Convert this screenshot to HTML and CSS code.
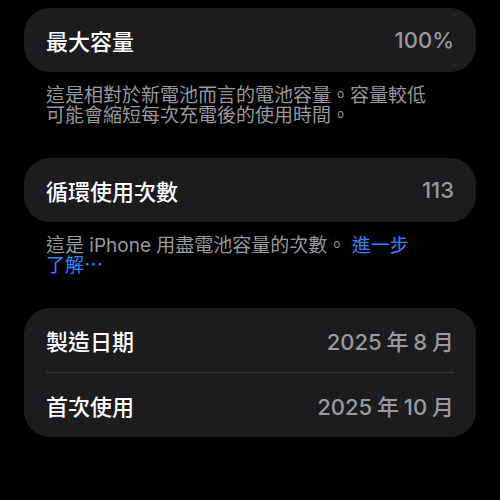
FILE: index.html
```html
<!DOCTYPE html>
<html lang="zh-Hant">
<head>
    <meta charset="UTF-8">
    <title>電池健康度</title>
    <link rel="stylesheet" href="styles.css">
</head>
<body>
<main class="battery">
    <section class="group">
        <div class="card">
            <div class="row">
                <span class="label">最大容量</span>
                <span class="value">100%</span>
            </div>
        </div>
        <p class="note">這是相對於新電池而言的電池容量。容量較低<br>可能會縮短每次充電後的使用時間。</p>
    </section>

    <section class="group">
        <div class="card">
            <div class="row">
                <span class="label">循環使用次數</span>
                <span class="value">113</span>
            </div>
        </div>
        <p class="note">這是 iPhone 用盡電池容量的次數。 <a href="#" class="more">進一步<br>了解⋯</a></p>
    </section>

    <section class="group">
        <div class="card">
            <div class="row">
                <span class="label">製造日期</span>
                <span class="value">2025 年 8 月</span>
            </div>
            <div class="divider"></div>
            <div class="row">
                <span class="label">首次使用</span>
                <span class="value">2025 年 10 月</span>
            </div>
        </div>
    </section>
</main>
</body>
</html>
```

FILE: styles.css
```css
* {
    margin: 0;
    padding: 0;
    box-sizing: border-box;
}

body {
    background: #000000;
    font-family: Inter, "Noto Sans CJK TC", sans-serif;
    color: #ffffff;
}

.battery {
    padding: 8px 24px 0;
}

.group {
    margin-bottom: 32px;
}

.card {
    background: #1c1c1e;
    border-radius: 26px;
}

.row {
    height: 64px;
    padding: 0 22px;
    display: flex;
    align-items: center;
    justify-content: space-between;
    font-size: 22px;
}

.label {
    font-weight: 500;
}

.value {
    color: #9a9a9f;
    font-weight: 500;
    word-spacing: -1px;
}

.divider {
    height: 1px;
    margin: 0 22px;
    background: #38383a;
}

.note {
    margin-top: 14px;
    padding: 0 22px;
    font-size: 19px;
    line-height: 20px;
    color: #98989d;
}

.more {
    color: #2a88ff;
    text-decoration: none;
}
```
